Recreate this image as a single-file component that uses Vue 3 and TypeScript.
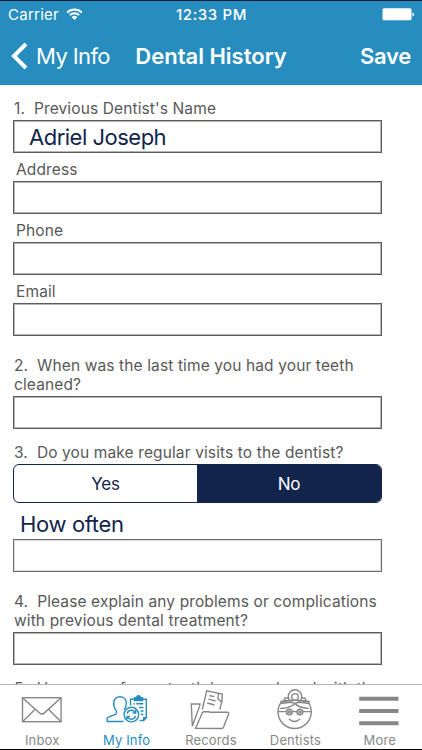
<script setup lang="ts">
import { ref } from 'vue'

interface Field {
  id: string
  label: string
  kind: string
  value: string
}

const fields = ref<Field[]>([
  { id: 'name', label: "1.\u00a0 Previous Dentist's Name", kind: 'first', value: 'Adriel Joseph' },
  { id: 'address', label: 'Address', kind: 'sub', value: '' },
  { id: 'phone', label: 'Phone', kind: 'sub', value: '' },
  { id: 'email', label: 'Email', kind: 'sub', value: '' },
  { id: 'cleaned', label: '2.\u00a0 When was the last time you had your teeth\ncleaned?', kind: 'question', value: '' },
])
const problemsLabel = '4.\u00a0 Please explain any problems or complications\nwith previous dental treatment?'
const regular = ref<'Yes' | 'No'>('No')
const options: Array<'Yes' | 'No'> = ['Yes', 'No']
const often = ref('')
const problems = ref('')
const tabs = ['Inbox', 'My Info', 'Records', 'Dentists', 'More']
const activeTab = ref('My Info')
</script>

<template>
  <div class="screen">
    <header class="header">
      <div class="status">
        <div class="carrier">
          <span>Carrier</span>
          <svg class="wifi" width="17" height="13" viewBox="0 0 17 13">
            <path d="M1.2 4.6a10.3 10.3 0 0 1 14.6 0M3.8 7.2a6.6 6.6 0 0 1 9.4 0" fill="none" stroke="#fff" stroke-width="1.9" />
            <path d="M5.7 9.1a4 4 0 0 1 5.6 0L8.5 12z" fill="#fff" />
          </svg>
        </div>
        <span class="clock">12:33 PM</span>
        <svg class="battery" width="33" height="13" viewBox="0 0 33 13">
          <rect x=".5" y=".3" width="29" height="12" rx="1.5" fill="#fff" />
          <path d="M30.5 4.5c2 .4 2 3.6 0 4z" fill="#fff" />
        </svg>
      </div>
      <nav class="nav">
        <button class="back">
          <svg width="17" height="28" viewBox="0 0 17 28">
            <path d="M15 2 3 14l12 12" fill="none" stroke="#fff" stroke-width="4" />
          </svg>
          <span>My Info</span>
        </button>
        <h1 class="title">Dental History</h1>
        <button class="save">Save</button>
      </nav>
    </header>

    <main class="form">
      <div v-for="f in fields" :key="f.id" class="field" :class="f.kind">
        <label :for="f.id" class="label">{{ f.label }}</label>
        <input :id="f.id" v-model="f.value" class="box" type="text" />
      </div>
      <div class="field choice">
        <span class="label">3.&nbsp; Do you make regular visits to the dentist?</span>
        <div class="segments">
          <button v-for="o in options" :key="o" class="segment" :class="{ on: regular === o }" @click="regular = o">
            {{ o }}
          </button>
        </div>
      </div>
      <div class="field">
        <label for="often" class="prompt">How often</label>
        <input id="often" v-model="often" class="box light" type="text" />
      </div>
      <div class="field question">
        <label for="problems" class="label">{{ problemsLabel }}</label>
        <input id="problems" v-model="problems" class="box" type="text" />
      </div>
      <div class="field last">
        <span class="label">5.&nbsp; Have any of your teeth been replaced with the</span>
      </div>
    </main>

    <footer class="tabs">
      <button v-for="t in tabs" :key="t" class="tab" :class="{ active: activeTab === t }" @click="activeTab = t">
        <svg class="icon" width="48" height="44" viewBox="0 0 48 44">
          <g v-if="t === 'Inbox'">
            <rect x="4.5" y="9.7" width="38.6" height="24" />
            <path d="m4.5 9.7 17 15.4q2.3 2 4.600 0l17-15.400M4.500 33.700l12.700-12.400M43.100 33.700 30.400 21.300" />
          </g>
          <g v-else-if="t === 'My Info'">
            <path d="M20.500 33.500H4.200v-3.200c1-2.400 7.600-2.800 9.100-4.600.7-1 .3-2.400-.4-3.500-2-2.400-2.400-5-2.100-7.500.4-3.800 2.800-6 6.200-6s6.100 2.300 6.300 6c.1 2.800-.5 5-2.100 7" />
            <path d="M27.500 17.500v-6.300h15.800v18.600l-2.600 2.700h-4M40.700 32.500v-2.700h2.600" />
            <path d="M31.500 12.600v-3h2.200c0-2.400 3.600-2.400 3.600 0h2.200v3z" fill="currentColor" />
            <path d="M30.500 15.700h1.300m1.500 0h7M36 19.500h4.500M37.500 23h3M38 26.500h2.500" />
            <circle cx="28.400" cy="26.600" r="7.300" fill="#fff" />
            <path d="M24.200 25.600a4.300 4.300 0 0 1 8-1.100M32.500 27.800a4.300 4.300 0 0 1-8 1.100M32.700 22v3h-3M24 31.400v-3h3" />
          </g>
          <g v-else-if="t === 'Records'">
            <path d="M12.900 16H4.300l1 22.300 7.300-20.100zM15.300 21.500l4.400-18.700 15.600 3.300-.5 8-2.100 7.400" />
            <path d="m31.500 5.500-.6 5.200 3.800 3.500" />
            <path d="m22.500 7.500 2.800.7 2.200.2M21.500 11.200l7.200 2M20.300 15l7.200 2" />
            <path d="m8.600 40.300 6.800-15.500q.5-1 1.600-1h4.500q1.100 0 1.500.5h17.500q1.700 0 1.200 1.500l-5.200 13.500q-.5 1.200-1.700 1.200z" fill="#fff" />
          </g>
          <g v-else-if="t === 'Dentists'">
            <path d="M9.800 14.700A16.600 16.600 0 1 0 37.500 14.700" />
            <path d="M10 13.500c8-1.800 20-1.800 28 0v2c-8-1.500-20-1.500-28 0zM13 12.500l1-2.500h4m12 0h4l1 2.500" />
            <circle cx="24" cy="8.400" r="6.700" fill="#fff" />
            <circle cx="24" cy="8.900" r="3.300" />
            <path d="M10 13.800c8-1.800 20-1.800 28 0" />
            <path d="M9.200 20.500c6.500-.2 11-1.200 15-5M24.200 15.500c2.500 3.500 7.500 4.500 13.500 5M7 23.600h8.300m16.600 0h8.600M21.300 23.600h4.600" />
            <circle cx="18.300" cy="24" r="2.900" fill="#c4c4c4" /><circle cx="28.900" cy="24" r="2.900" fill="#c4c4c4" />
            <circle cx="18.300" cy="24" r=".6" /><circle cx="28.900" cy="24" r=".6" />
            <path d="M18 31q5.500 5 11 0" />
          </g>
          <g v-else class="bars">
            <path d="M3.200 10.700h39.300M3.200 23h39.300M3.200 35.300h39.300" />
          </g>
        </svg>
        <span class="tab-label">{{ t }}</span>
      </button>
    </footer>
  </div>
</template>

<style>
body {
  margin: 0;
  overflow: hidden;
}
</style>

<style scoped>
.screen {
  width: 422px;
  height: 750px;
  box-sizing: border-box;
  display: flex;
  flex-direction: column;
  overflow: hidden;
  background: #fff;
  border-top: 1px solid #091c36;
  border-bottom: 1px solid #000;
  font-family: Inter, Roboto, sans-serif;
  color: #585858;
}
button {
  border: 0;
  padding: 0;
  margin: 0;
  background: none;
  color: inherit;
  font: inherit;
  letter-spacing: inherit;
}
.header {
  height: 84px;
  flex: none;
  background: #278dbf;
  color: #fff;
}
.status {
  height: 27px;
  display: grid;
  grid-template-columns: 1fr auto 1fr;
  align-items: center;
  padding: 0 7px 0 8px;
  font-size: 15px;
}
.carrier {
  display: flex;
  align-items: center;
  gap: 7px;
  letter-spacing: 0.25px;
}
.clock {
  font-weight: 500;
  letter-spacing: 0.75px;
}
.clock {
  letter-spacing: 0.6px;
}
.battery {
  justify-self: end;
}
.nav {
  height: 56px;
  display: grid;
  grid-template-columns: 1fr auto 1fr;
  align-items: center;
  padding: 0 11px;
  font-size: 22px;
}
.back {
  display: flex;
  align-items: center;
  gap: 8px;
  letter-spacing: -0.6px;
}
.title {
  margin: 0;
  font-size: 22px;
  font-weight: 600;
}
.save {
  justify-self: end;
  font-weight: 600;
  letter-spacing: -0.3px;
}
.form {
  height: 599px;
  flex: none;
  overflow: hidden;
  box-sizing: border-box;
  padding: 14px 40px 0 13px;
}
.field {
  display: flex;
  flex-direction: column;
}
.label {
  font-size: 15.5px;
  line-height: 19px;
  letter-spacing: 0.12px;
  white-space: pre;
  padding-left: 1px;
}
.first .label {
  padding-bottom: 2px;
}
.sub .label {
  padding: 7px 0 2px 3px;
}
.question {
  padding-top: 20px;
}
.question .label {
  padding-bottom: 2px;
}
.box {
  height: 33px;
  width: 369px;
  box-sizing: border-box;
  margin: 0;
  padding: 0 15px;
  border: 1px solid #5c5c5c;
  box-shadow: inset 0 0 0 1px rgba(88, 88, 88, 0.45);
  outline: 0;
  border-radius: 0;
  background: #fff;
  color: #12244b;
  font: 22px Inter, Roboto, sans-serif;
  letter-spacing: -0.5px;
}
.box.light {
  border-color: #6b6b6b;
  box-shadow: inset 0 0 0 1px rgba(88, 88, 88, 0.2);
}
.choice {
  padding-top: 14px;
}
.choice .label {
  padding-bottom: 2px;
}
.segments {
  height: 39px;
  display: grid;
  grid-template-columns: 183px 1fr;
  box-sizing: border-box;
  border: 1px solid #12244b;
  border-radius: 6px;
  overflow: hidden;
}
.segment {
  color: #12244b;
  font-size: 17px;
  letter-spacing: -0.2px;
}
.segment.on {
  background: #12244b;
  color: #fff;
}
.prompt {
  padding: 8px 0 1px 7px;
  color: #12244b;
  font-size: 22px;
  line-height: 27px;
  letter-spacing: -0.35px;
}
.last {
  padding-top: 14px;
}
.tabs {
  flex: 1;
  display: grid;
  grid-template-columns: repeat(5, 1fr);
  box-sizing: border-box;
  border-top: 1px solid #b5b5b5;
  background: #fff;
}
.tab {
  display: flex;
  flex-direction: column;
  align-items: center;
  padding-top: 3px;
  color: #878787;
}
.tab.active {
  color: #278dbf;
}
.icon {
  flex: none;
  fill: none;
  stroke: currentColor;
  stroke-width: 1.4;
}
.bars {
  stroke-width: 4;
}
.tab-label {
  font-size: 13px;
  line-height: 16px;
  letter-spacing: 0.15px;
}
</style>
